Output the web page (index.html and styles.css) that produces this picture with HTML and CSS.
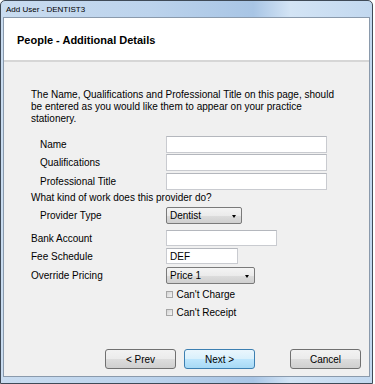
FILE: index.html
```html
<!DOCTYPE html>
<html lang="en">
<head>
  <meta charset="UTF-8">
  <title>Add User - DENTIST3</title>
  <link rel="stylesheet" href="styles.css">
</head>
<body>
  <div class="window">
    <div class="titlebar">Add User - DENTIST3</div>
    <div class="client">
      <div class="header">People - Additional Details</div>
      <div class="content">
        <p class="intro">The Name, Qualifications and Professional Title on this page, should be entered as you would like them to appear on your practice stationery.</p>

        <div class="form">
          <div class="row">
            <label class="lbl indent">Name</label>
            <input class="field wide" type="text">
          </div>
          <div class="row">
            <label class="lbl indent">Qualifications</label>
            <input class="field wide" type="text">
          </div>
          <div class="row">
            <label class="lbl indent">Professional Title</label>
            <input class="field wide" type="text">
          </div>
          <div class="question">What kind of work does this provider do?</div>
          <div class="row tall">
            <label class="lbl indent">Provider Type</label>
            <div class="combo type">Dentist<span class="arrow"></span></div>
          </div>
          <div class="row bank">
            <label class="lbl">Bank Account</label>
            <input class="field mid" type="text">
          </div>
          <div class="row">
            <label class="lbl">Fee Schedule</label>
            <input class="field short" type="text" value="DEF">
          </div>
          <div class="row pricing">
            <label class="lbl">Override Pricing</label>
            <div class="combo price">Price 1<span class="arrow"></span></div>
          </div>
          <div class="row">
            <span class="lbl"></span>
            <span class="check"><span class="box"></span>Can't Charge</span>
          </div>
          <div class="row">
            <span class="lbl"></span>
            <span class="check"><span class="box"></span>Can't Receipt</span>
          </div>
        </div>

        <div class="buttons">
          <button class="btn">&lt; Prev</button>
          <button class="btn default">Next &gt;</button>
          <button class="btn cancel">Cancel</button>
        </div>
      </div>
    </div>
  </div>
</body>
</html>
```

FILE: styles.css
```css
body {
  margin: 0;
  background: #fff;
  font-family: 'Liberation Sans', Arial, sans-serif;
}
.window {
  box-sizing: border-box;
  width: 373px;
  height: 384px;
  display: flex;
  flex-direction: column;
  padding: 0 2px 6px 2px;
  border: 1px solid #3f4a57;
  border-radius: 5px 5px 0 0;
  background: linear-gradient(to right, #c9dcf0 0%, #bcd3ec 40%, #a8c5e5 68%, #d3e4f5 78%, #c2d8ef 100%);
}
.titlebar {
  height: 16px;
  line-height: 17px;
  padding-left: 3px;
  font-size: 8px;
  color: #000;
}
.client {
  flex: 1;
  display: flex;
  flex-direction: column;
  border: 1px solid #8a9aac;
  background: #f0f0f0;
}
.header {
  height: 42px;
  line-height: 44px;
  padding-left: 13px;
  background: #fff;
  border-bottom: 2px solid #d6d6d6;
  font-size: 11px;
  font-weight: bold;
  color: #000;
}
.content {
  flex: 1;
  display: flex;
  flex-direction: column;
  padding: 27px 0 7px 27px;
  font-size: 10px;
  color: #000;
}
.intro {
  width: 310px;
  margin: 0;
  line-height: 12px;
}
.form {
  margin-top: 10px;
  display: flex;
  flex-direction: column;
}
.row {
  display: flex;
  align-items: center;
  height: 18.5px;
}
.row.tall {
  height: 24px;
}
.row.bank {
  margin-top: 1.5px;
  height: 18px;
}
.row.pricing {
  margin-top: 1px;
}
.lbl {
  box-sizing: border-box;
  width: 135px;
  flex-shrink: 0;
}
.lbl.indent {
  padding-left: 9px;
}
.question {
  height: 13px;
  line-height: 13px;
}
.field {
  box-sizing: border-box;
  height: 17px;
  margin: 0;
  padding: 0 3px;
  border: 1px solid #c9cbd0;
  border-top-color: #b4b7bd;
  background: #fff;
  font-family: inherit;
  font-size: 10px;
  color: #000;
  outline: none;
}
.field.wide { width: 161px; }
.field.mid { width: 111px; height: 16px; }
.field.short { width: 72px; height: 16px; }
.combo {
  position: relative;
  box-sizing: border-box;
  height: 17px;
  line-height: 15px;
  padding-left: 3px;
  border: 1px solid #7a7a7a;
  border-radius: 2px;
  background: linear-gradient(#f4f4f4 0%, #ebebeb 50%, #dddddd 51%, #cfcfcf 100%);
}
.combo.type { width: 76px; }
.combo.price { width: 89px; }
.arrow {
  position: absolute;
  right: 5px;
  top: 7px;
  width: 0;
  height: 0;
  border-left: 2.5px solid transparent;
  border-right: 2.5px solid transparent;
  border-top: 3px solid #000;
}
.check {
  display: flex;
  align-items: center;
}
.box {
  box-sizing: border-box;
  width: 7px;
  height: 7px;
  margin-right: 3.5px;
  border: 1px solid #a6a6a6;
  background: linear-gradient(135deg, #d4d4d4, #f4f4f4);
}
.buttons {
  margin-top: auto;
  display: flex;
  justify-content: flex-end;
  padding-right: 8px;
}
.btn {
  box-sizing: border-box;
  width: 71px;
  height: 20px;
  margin: 0;
  padding: 0;
  border: 1px solid #707070;
  border-radius: 3px;
  background: linear-gradient(#f2f2f2 0%, #ebebeb 50%, #dddddd 51%, #cfcfcf 100%);
  font-family: inherit;
  font-size: 10px;
  color: #000;
}
.btn.default {
  margin-left: 8px;
  border-color: #3c7fb1;
  background: linear-gradient(#eaf6fd 0%, #d9f0fc 50%, #bee6fd 51%, #a7d9f5 100%);
}
.btn.cancel {
  margin-left: 35px;
}
```
